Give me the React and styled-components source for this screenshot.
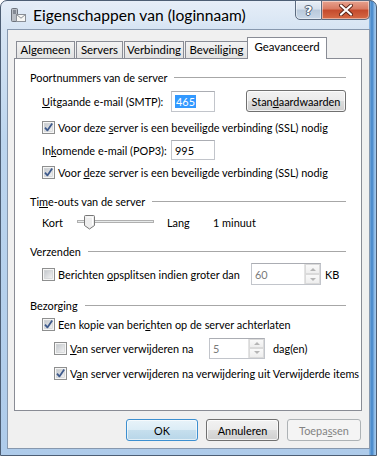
import React from 'react';
import styled, { createGlobalStyle, css } from 'styled-components';

const GlobalStyle = createGlobalStyle`
  html, body { margin: 0; padding: 0; background: #fff; }
  body {
    font-family: Lato, "Liberation Sans", sans-serif;
    font-size: 10.9px;
    color: #000;
  }
`;

const Window = styled.div`
  box-sizing: border-box;
  width: 377px;
  height: 456px;
  border: 1px solid #4d5e74;
  border-radius: 7px 7px 0 0;
  padding: 0 6px 6px;
  display: flex;
  flex-direction: column;
  background:
    linear-gradient(to right, rgba(255,255,255,0) 368px, #8fbbe6 368px, #3f83c8 371px, #9cc5ec 374px),
    linear-gradient(to bottom, #e6eef8 0, #d6e4f3 28px, #bcd5ee 140px, #aecbea 100%);
`;

const TitleBar = styled.div`
  height: 28px;
  display: flex;
  align-items: center;
  padding-left: 3px;
`;

const Title = styled.span`
  margin-left: 7px;
  font-size: 15.6px;
  color: #000;
  text-shadow: 0 0 6px rgba(255,255,255,0.9);
`;

const CaptionButtons = styled.div`
  margin-left: auto;
  align-self: flex-start;
  display: flex;
  margin-top: -1px;
`;

const CaptionButton = styled.div`
  box-sizing: border-box;
  width: ${p => p.$w}px;
  height: 20px;
  border: 1px solid #5c6b80;
  display: flex;
  align-items: center;
  justify-content: center;
  box-shadow: inset 0 0 0 1px rgba(255,255,255,0.45);
  ${p => p.$close ? css`
    border-left: none;
    border-radius: 0 0 5px 0;
    background: linear-gradient(#e7a28f 0%, #d87a62 45%, #c44a2c 50%, #d66a45 100%);
  ` : css`
    border-radius: 0 0 0 5px;
    background: linear-gradient(#e9eff6 0%, #d6e0ec 45%, #b9c9db 50%, #c9d8e8 100%);
  `}
`;

const HelpGlyph = styled.span`
  font-family: "DejaVu Sans", sans-serif;
  font-weight: bold;
  font-size: 13px;
  color: #fff;
  text-shadow: 0 0 1px #3a4656, 1px 0 0 #56647a, -1px 0 0 #56647a, 0 1px 0 #56647a, 0 -1px 0 #56647a;
`;

const Client = styled.div`
  flex: 1;
  display: flex;
  flex-direction: column;
  border: 1px solid #8798ae;
  background: #f0f0f0;
  padding: 7px 7px 7px 6px;
`;

const TabRow = styled.div`
  display: flex;
  align-items: flex-end;
  height: 22px;
  margin-bottom: -1px;
  padding-left: 2px;
  position: relative;
  z-index: 1;
`;

const Tab = styled.div`
  box-sizing: border-box;
  width: ${p => p.$w}px;
  display: flex;
  justify-content: center;
  border: 1px solid #898c95;
  border-bottom: none;
  font-size: 11.4px;
  ${p => p.$active ? css`
    height: 22px;
    margin-left: -2px;
    background: #fff;
    line-height: 17px;
  ` : css`
    height: 17px;
    margin-right: 1px;
    margin-bottom: 1px;
    background: linear-gradient(#f3f3f3, #e2e2e2);
    line-height: 16px;
  `}
`;

const Panel = styled.div`
  flex: 1;
  background: #fff;
  border: 1px solid #898c95;
  padding: 10px 15px 0;
  display: flex;
  flex-direction: column;
`;

const GroupHeading = styled.div`
  display: flex;
  align-items: center;
  gap: 7px;
  height: 16px;
  margin-top: ${p => p.$top || 0}px;

  &::after {
    content: '';
    flex: 1;
    height: 1px;
    background: #a7a7a7;
  }
`;

const Row = styled.div`
  display: flex;
  align-items: center;
  height: ${p => p.$h || 16}px;
  margin-top: ${p => p.$top || 0}px;
  padding-left: ${p => p.$indent || 0}px;
`;

const FieldLabel = styled.span`
  flex: none;
  width: ${p => p.$w}px;
  margin-left: ${p => p.$gap || 0}px;
  white-space: nowrap;
`;

const CheckLabel = styled.label`
  display: flex;
  align-items: center;
  gap: 3px;
  white-space: nowrap;

  svg { flex: none; }
`;

const LabelText = styled.span`
  flex: none;
  width: ${p => (p.$w ? `${p.$w}px` : 'auto')};
`;

const TextBox = styled.div`
  box-sizing: border-box;
  flex: none;
  width: ${p => p.$w}px;
  height: ${p => p.$h || 21}px;
  display: flex;
  align-items: center;
  padding-left: 3px;
  border: 1px solid #c2c5cb;
  border-top-color: #abadb3;
  background: #fff;
  color: ${p => (p.$disabled ? '#7a7a7a' : '#000')};
`;

const Selected = styled.span`
  background: #3399ff;
  color: #fff;
  padding: 0 1px;
`;

const Spinner = styled.div`
  margin-left: auto;
  width: 15px;
  height: 100%;
  display: flex;
  flex-direction: column;
  border-left: 1px solid #e3e3e3;
`;

const SpinHalf = styled.div`
  flex: 1;
  display: flex;
  align-items: center;
  justify-content: center;
  background: linear-gradient(#f9f9f9, #eeeeee);
  border: 1px solid #dadada;
`;

const Arrow = styled.span`
  width: 0;
  height: 0;
  border-left: 3px solid transparent;
  border-right: 3px solid transparent;
  ${p => p.$down
    ? css`border-top: 3px solid #b5b5b5;`
    : css`border-bottom: 3px solid #b5b5b5;`}
`;

const Unit = styled.span`
  margin-left: ${p => p.$gap}px;
`;

const PushButton = styled.button`
  box-sizing: border-box;
  flex: none;
  width: ${p => p.$w}px;
  height: 22px;
  padding: 0;
  margin-left: ${p => (p.$push ? 'auto' : '0')};
  font: inherit;
  color: #000;
  border: 1px solid #707070;
  border-radius: 3px;
  background: linear-gradient(#f2f2f2 0%, #ebebeb 50%, #dddddd 50%, #cfcfcf 100%);
  box-shadow: inset 0 0 0 1px rgba(255,255,255,0.75);
  ${p => p.$default && css`
    border-color: #3c8fd0;
    background: linear-gradient(#e8f3f9 0%, #dbecf6 50%, #c6dfee 50%, #b8d6e9 100%);
    box-shadow: inset 0 0 0 1px rgba(255,255,255,0.6);
  `}
  ${p => p.disabled && css`
    border-color: #adb2b5;
    background: #f4f4f4;
    color: #838383;
    box-shadow: none;
  `}
`;

const ButtonRow = styled.div`
  display: flex;
  justify-content: flex-end;
  gap: 8px;
  margin-top: 8px;
  margin-right: 1px;
`;

const SliderRow = styled(Row)`
  svg { flex: none; }
`;

const Check = ({ checked }) => (
  <svg width="13" height="13" viewBox="0 0 13 13">
    <defs>
      <linearGradient id="cbfill" x1="0" y1="0" x2="1" y2="1">
        <stop offset="0" stopColor="#c3c7cc" />
        <stop offset="1" stopColor="#f3f3f3" />
      </linearGradient>
    </defs>
    <rect x="0.5" y="0.5" width="12" height="12" fill="#f6f6f6" stroke="#8e8f8f" />
    <rect x="2.5" y="2.5" width="8" height="8" fill="url(#cbfill)" stroke="#c9cbcd" strokeWidth="0.6" />
    {checked && (
      <path d="M3 6.6 L5.4 9.4 L10.2 2.6" fill="none" stroke="#3e5a8c" strokeWidth="1.8" strokeLinejoin="round" />
    )}
  </svg>
);

const Slider = () => (
  <svg width="80" height="18" viewBox="0 0 80 18">
    <rect x="0.5" y="7.5" width="76" height="2" fill="#e7eaea" stroke="#b0b0b0" />
    <line x1="1" y1="10.5" x2="77" y2="10.5" stroke="#ffffff" />
    <path d="M8.5 2.5 h8 a1 1 0 0 1 1 1 v9 l-5 3.5 l-5 -3.5 v-9 a1 1 0 0 1 1 -1 z" fill="#eeeeee" stroke="#777" />
    <path d="M9.5 4 h6 v8" fill="none" stroke="#fff" />
  </svg>
);

const AccountIcon = () => (
  <svg width="16" height="16" viewBox="0 0 16 16">
    <rect x="1.5" y="1.5" width="6" height="13" rx="1" fill="#b9bec5" stroke="#6d737c" />
    <line x1="3" y1="4" x2="6" y2="4" stroke="#4f5560" />
    <line x1="3" y1="6" x2="6" y2="6" stroke="#4f5560" />
    <rect x="6.5" y="7.5" width="9" height="7" fill="#f7f7f4" stroke="#8a8f96" />
    <path d="M6.5 7.5 L11 11.2 L15.5 7.5" fill="none" stroke="#8a8f96" />
  </svg>
);

const CloseGlyph = () => (
  <svg width="14" height="12" viewBox="0 0 14 12">
    <path d="M2 1.5 L12 10.5 M12 1.5 L2 10.5" stroke="#5a2418" strokeWidth="4" strokeLinecap="round" />
    <path d="M2 1.5 L12 10.5 M12 1.5 L2 10.5" stroke="#ffffff" strokeWidth="2.2" strokeLinecap="round" />
  </svg>
);

const Spin = () => (
  <Spinner>
    <SpinHalf><Arrow /></SpinHalf>
    <SpinHalf><Arrow $down /></SpinHalf>
  </Spinner>
);

const tabs = [
  { label: 'Algemeen', w: 59 },
  { label: 'Servers', w: 47 },
  { label: 'Verbinding', w: 60 },
  { label: 'Beveiliging', w: 63 },
  { label: 'Geavanceerd', w: 80, active: true },
];

export default function App() {
  return (
    <>
      <GlobalStyle />
      <Window>
        <TitleBar>
          <AccountIcon />
          <Title>Eigenschappen van (loginnaam)</Title>
          <CaptionButtons>
            <CaptionButton $w={27}><HelpGlyph>?</HelpGlyph></CaptionButton>
            <CaptionButton $w={48} $close><CloseGlyph /></CaptionButton>
          </CaptionButtons>
        </TitleBar>

        <Client>
          <TabRow>
            {tabs.map(t => (
              <Tab key={t.label} $w={t.w} $active={t.active}>{t.label}</Tab>
            ))}
          </TabRow>

          <Panel>
            <GroupHeading><span>Poortnummers van de server</span></GroupHeading>
            <Row $h={22} $top={5} $indent={12}>
              <FieldLabel $w={129}><u>U</u>itgaande e-mail (SMTP):</FieldLabel>
              <TextBox $w={44}><Selected>465</Selected></TextBox>
              <PushButton $w={100} $push>Stan<u>d</u>aardwaarden</PushButton>
            </Row>
            <Row $top={7} $indent={12}>
              <CheckLabel>
                <Check checked />
                <LabelText>Voor deze <u>s</u>erver is een beveiligde verbinding (SSL) nodig</LabelText>
              </CheckLabel>
            </Row>
            <Row $h={22} $top={4} $indent={12}>
              <FieldLabel $w={129}>In<u>k</u>omende e-mail (POP3):</FieldLabel>
              <TextBox $w={44} $h={20}>995</TextBox>
            </Row>
            <Row $top={3} $indent={12}>
              <CheckLabel>
                <Check checked />
                <LabelText>Voor <u>d</u>eze server is een beveiligde verbinding (SSL) nodig</LabelText>
              </CheckLabel>
            </Row>

            <GroupHeading $top={13}><span>Ti<u>m</u>e-outs van de server</span></GroupHeading>
            <SliderRow $h={18} $top={4} $indent={12}>
              <FieldLabel $w={35}>Kort</FieldLabel>
              <Slider />
              <FieldLabel $w={46} $gap={10}>Lang</FieldLabel>
              <span>1 minuut</span>
            </SliderRow>

            <GroupHeading $top={12}><span>Verzenden</span></GroupHeading>
            <Row $h={22} $top={4} $indent={12}>
              <CheckLabel>
                <Check />
                <LabelText $w={193}>Berichten <u>o</u>psplitsen indien groter dan</LabelText>
              </CheckLabel>
              <TextBox $w={70} $h={22} $disabled>60<Spin /></TextBox>
              <Unit $gap={4}>KB</Unit>
            </Row>

            <GroupHeading $top={12}><span>Bezorging</span></GroupHeading>
            <Row $top={3} $indent={12}>
              <CheckLabel>
                <Check checked />
                <LabelText>Een kopie van beri<u>c</u>hten op de server achterlaten</LabelText>
              </CheckLabel>
            </Row>
            <Row $h={22} $top={5} $indent={24}>
              <CheckLabel>
                <Check />
                <LabelText $w={139}><u>V</u>an server verwijderen na</LabelText>
              </CheckLabel>
              <TextBox $w={56} $h={21} $disabled>5<Spin /></TextBox>
              <Unit $gap={8}>dag(en)</Unit>
            </Row>
            <Row $top={6} $indent={24}>
              <CheckLabel>
                <Check checked />
                <LabelText>V<u>a</u>n server verwijderen na verwijdering uit Verwijderde items</LabelText>
              </CheckLabel>
            </Row>
          </Panel>

          <ButtonRow>
            <PushButton $w={72} $default>OK</PushButton>
            <PushButton $w={73}>Annuleren</PushButton>
            <PushButton $w={74} disabled>Toepa<u>s</u>sen</PushButton>
          </ButtonRow>
        </Client>
      </Window>
    </>
  );
}
